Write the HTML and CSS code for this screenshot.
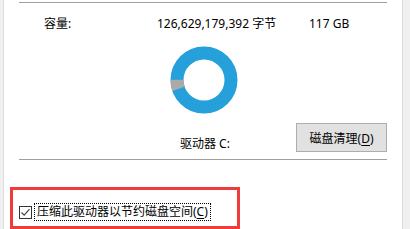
FILE: index.html
```html
<html>
<head>
<title>本地磁盘 (C:) 属性</title>
<link rel="stylesheet" href="styles.css">
</head>
<body>

<div class="panel">
  <div class="rule rule-top"></div>

  <div class="capacity">
    <span class="cap-label">容量:</span>
    <span class="cap-bytes">126,629,179,392 字节</span>
    <span class="cap-size">117 GB</span>
  </div>

  <div class="chart">
    <svg width="68" height="68" viewBox="0 0 68 68">
      <circle cx="34" cy="34" r="27" fill="none" stroke="#26a0da" stroke-width="13"/>
      <!-- free space slice, about 20 degrees just under 9 o'clock -->
      <circle cx="34" cy="34" r="27" fill="none" stroke="#aaaaaa" stroke-width="13"
        stroke-dasharray="9.42 160.23" stroke-dashoffset="-75.4"/>
    </svg>
  </div>

  <div class="drive">
    <span class="drive-label">驱动器 C:</span>
    <button class="btn">磁盘清理(<u>D</u>)</button>
  </div>

  <div class="rule rule-bottom"></div>

  <div class="highlight">
    <label class="check">
      <span class="box">
        <svg width="11" height="11" viewBox="0 0 11 11">
          <path d="M1.5 5.5 L4.2 8.2 L9.5 2.2" fill="none" stroke="#444" stroke-width="1.2"/>
        </svg>
      </span>
      <span class="check-text">压缩此驱动器以节约磁盘空间(<u>C</u>)</span>
    </label>
  </div>
</div>

</body>
</html>
```

FILE: styles.css
```css
body {
  margin: 0;
  background-color: #f0f0f0;
  font-family: "Noto Sans", "Noto Sans CJK SC", sans-serif;
  font-size: 12px;
  color: #000;
}

.panel {
  margin-left: 3px;
  width: 400px;
  height: 229px;
  box-sizing: border-box;
  padding: 2px 15px 0 15px;
  background-color: #fff;
  border-left: 1px solid #dcdcdc;
  border-right: 1px solid #dcdcdc;
  overflow: hidden;
}

.rule {
  border-top: 1px solid #a0a0a0;
}

.capacity {
  display: flex;
  margin-top: 13px;
  padding-left: 25px;
  line-height: 16px;
}

.cap-label {
  width: 113px;
}

.cap-bytes {
  width: 152px;
}

.chart {
  display: flex;
  margin-top: 14px;
  padding-left: 151px;
}

.drive {
  display: flex;
  align-items: flex-end;
  margin-top: 9px;
  line-height: 16px;
}

.drive-label {
  margin-left: 161px;
  width: 119px;
}

.btn {
  width: 93px;
  height: 29px;
  padding: 0;
  font-family: inherit;
  font-size: 12px;
  color: #000;
  background-color: #e1e1e1;
  border: 1px solid #adadad;
  border-radius: 0;
}

.btn u {
  text-underline-offset: 2px;
}

.rule-bottom {
  margin-top: 7px;
}

.highlight {
  margin: 27px 0 0 -9px;
  width: 230px;
  height: 42px;
  box-sizing: border-box;
  padding: 13px 0 0 6px;
  border: 3px solid #f03b3b;
}

.check {
  display: flex;
  align-items: center;
  height: 18px;
}

.box {
  display: flex;
  align-items: center;
  justify-content: center;
  width: 13px;
  height: 13px;
  box-sizing: border-box;
  border: 1px solid #333;
  background-color: #fff;
}

.check-text {
  margin-left: 2px;
  padding: 0 2px;
  line-height: 16px;
  border: 1px dotted #000;
}

.check-text u {
  text-underline-offset: 2px;
}
```
